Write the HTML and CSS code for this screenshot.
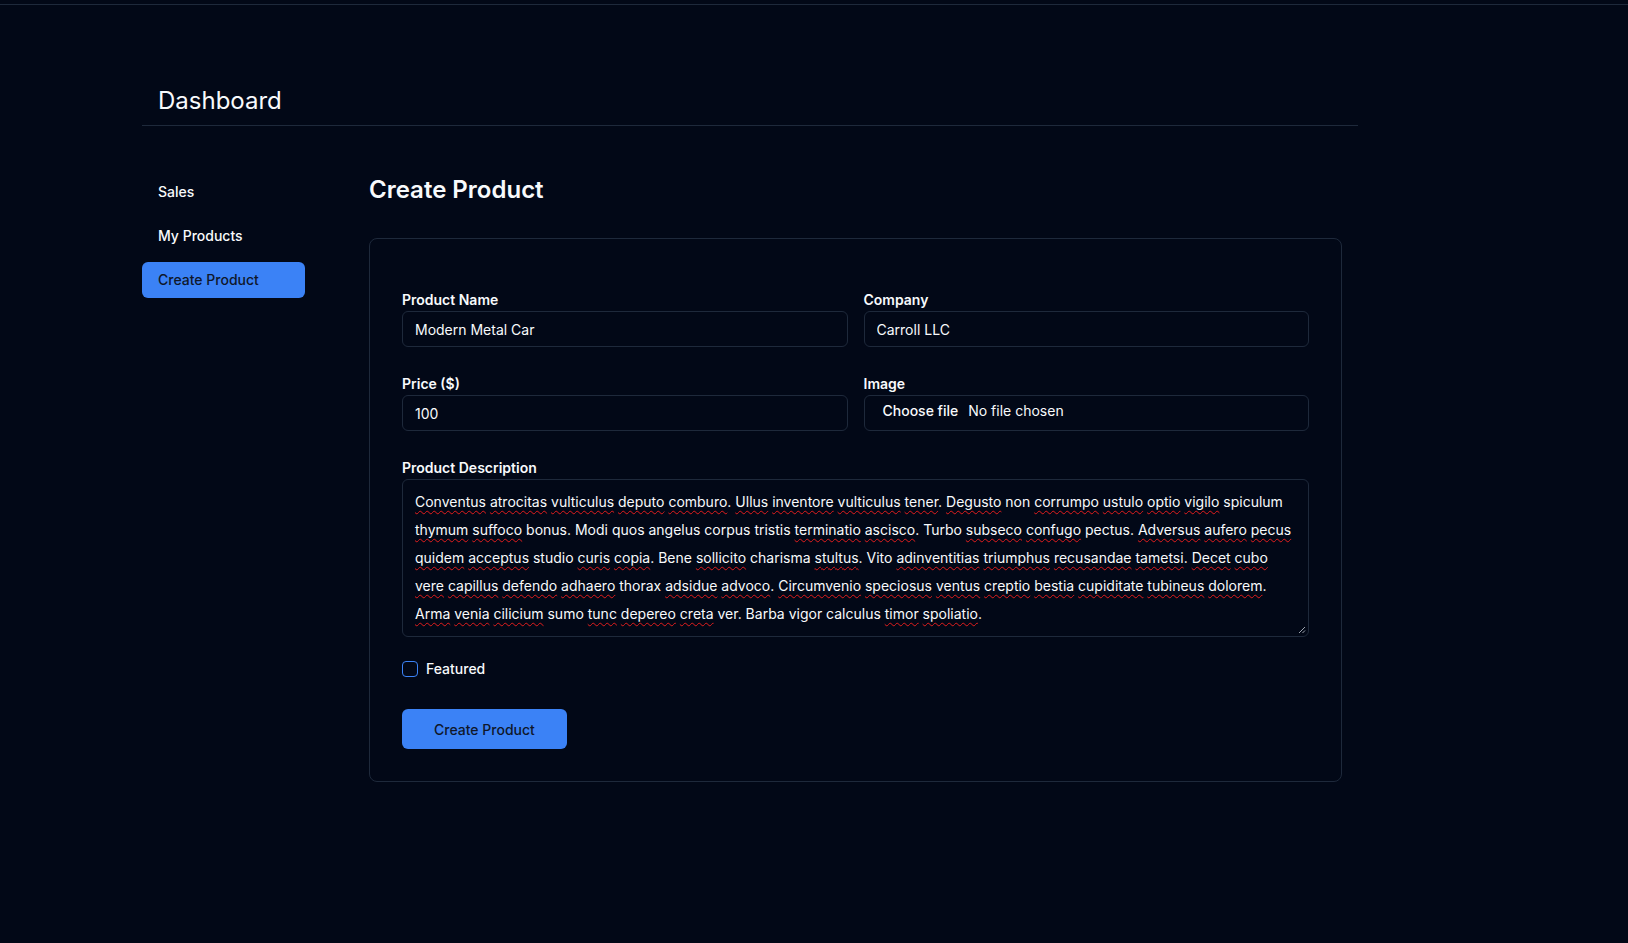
FILE: index.html
```html
<!DOCTYPE html>
<html lang="en">
<head>
<meta charset="utf-8">
<title>Dashboard - Create Product</title>
<link rel="stylesheet" href="styles.css">
</head>
<body>
<div class="topbar"></div>
<div class="page">
  <header class="header">Dashboard</header>
  <div class="layout">
    <nav class="sidebar">
      <a class="nav-item" href="#">Sales</a>
      <a class="nav-item" href="#">My Products</a>
      <a class="nav-item active" href="#">Create Product</a>
    </nav>
    <main class="main">
      <h1 class="title">Create Product</h1>
      <form class="card">
        <div class="grid">
          <div class="field">
            <label class="label" for="name">Product Name</label>
            <input class="input" id="name" type="text" value="Modern Metal Car">
          </div>
          <div class="field">
            <label class="label" for="company">Company</label>
            <input class="input" id="company" type="text" value="Carroll LLC">
          </div>
          <div class="field">
            <label class="label" for="price">Price ($)</label>
            <input class="input" id="price" type="text" value="100">
          </div>
          <div class="field">
            <span class="label">Image</span>
            <label class="input file-box" for="image">
              <input class="file-native" id="image" type="file">
              <span class="file-btn">Choose file</span>
              <span class="file-name">No file chosen</span>
            </label>
          </div>
          <div class="field wide">
            <label class="label" for="desc">Product Description</label>
            <div class="textarea" id="desc" role="textbox" aria-multiline="true"><span class="sp">Conventus</span> <span class="sp">atrocitas</span> <span class="sp">vulticulus</span> <span class="sp">deputo</span> <span class="sp">comburo</span>. <span class="sp">Ullus</span> <span class="sp">inventore</span> <span class="sp">vulticulus</span> <span class="sp">tener</span>. <span class="sp">Degusto</span> non <span class="sp">corrumpo</span> <span class="sp">ustulo</span> <span class="sp">optio</span> <span class="sp">vigilo</span> spiculum <span class="sp">thymum</span> <span class="sp">suffoco</span> bonus. Modi quos angelus corpus tristis <span class="sp">terminatio</span> <span class="sp">ascisco</span>. Turbo <span class="sp">subseco</span> <span class="sp">confugo</span> pectus. <span class="sp">Adversus</span> <span class="sp">aufero</span> <span class="sp">pecus</span> <span class="sp">quidem</span> <span class="sp">acceptus</span> studio <span class="sp">curis</span> <span class="sp">copia</span>. Bene <span class="sp">sollicito</span> charisma <span class="sp">stultus</span>. Vito <span class="sp">adinventitias</span> <span class="sp">triumphus</span> <span class="sp">recusandae</span> <span class="sp">tametsi</span>. <span class="sp">Decet</span> <span class="sp">cubo</span> <span class="sp">vere</span> <span class="sp">capillus</span> <span class="sp">defendo</span> <span class="sp">adhaero</span> thorax <span class="sp">adsidue</span> <span class="sp">advoco</span>. <span class="sp">Circumvenio</span> <span class="sp">speciosus</span> <span class="sp">ventus</span> <span class="sp">creptio</span> <span class="sp">bestia</span> <span class="sp">cupiditate</span> <span class="sp">tubineus</span> <span class="sp">dolorem</span>. <span class="sp">Arma</span> <span class="sp">venia</span> <span class="sp">cilicium</span> sumo <span class="sp">tunc</span> <span class="sp">depereo</span> <span class="sp">creta</span> ver. Barba vigor calculus <span class="sp">timor</span> <span class="sp">spoliatio</span>.<svg class="grip" width="8" height="8" viewBox="0 0 8 8"><path d="M7 1 L1 7 M7 4.5 L4.5 7" stroke="#9ca3af" stroke-width="1"/></svg></div>
          </div>
        </div>
        <label class="check-row">
          <input class="checkbox" type="checkbox">
          <span>Featured</span>
        </label>
        <button class="button" type="button">Create Product</button>
      </form>
    </main>
  </div>
</div>
</body>
</html>
```

FILE: styles.css
```css
html, body {
  margin: 0;
  background: #020817;
}
body {
  font-family: Inter, "Noto Sans", sans-serif;
  color: #f8fafc;
  font-size: 14px;
  line-height: 20px;
}
.topbar {
  height: 4px;
  border-bottom: 1px solid #1e293b;
}
.page {
  margin-left: 142px;
  width: 1216px;
}
.header {
  padding: 80px 16px 8px;
  border-bottom: 1px solid #1e293b;
  font-size: 24px;
  line-height: 32px;
  font-weight: 400;
}
.layout {
  display: flex;
  gap: 64px;
  padding-top: 48px;
  width: 1200px;
}
.sidebar {
  width: 163px;
  flex: none;
  display: flex;
  flex-direction: column;
  gap: 8px;
}
.nav-item {
  display: block;
  padding: 8px 16px;
  border-radius: 6px;
  color: #f8fafc;
  text-decoration: none;
  font-size: 14px;
  line-height: 20px;
  font-weight: 500;
}
.nav-item.active {
  background: #3b82f6;
  color: #0f172a;
}
.main {
  width: 973px;
  flex: none;
}
.title {
  margin: 0 0 32px;
  font-size: 24px;
  line-height: 32px;
  font-weight: 600;
}
.card {
  border: 1px solid #1e293b;
  border-radius: 8px;
  padding: 52px 32px 32px;
}
.grid {
  display: grid;
  grid-template-columns: 1fr 1fr;
  column-gap: 16px;
  row-gap: 28px;
}
.field.wide {
  grid-column: 1 / span 2;
}
.label {
  display: block;
  font-size: 14px;
  line-height: 18px;
  margin-bottom: 2px;
  font-weight: 600;
}
.input {
  display: block;
  box-sizing: border-box;
  width: 100%;
  height: 36px;
  margin: 0;
  padding: 0 12px;
  border: 1px solid #1e293b;
  border-radius: 6px;
  background: transparent;
  color: #f8fafc;
  font-family: inherit;
  font-size: 14px;
  font-weight: 400;
  outline: none;
}
.file-box {
  position: relative;
  display: flex;
  align-items: flex-start;
  padding-top: 4px;
  line-height: 22px;
  cursor: pointer;
}
.file-native {
  position: absolute;
  width: 1px;
  height: 1px;
  opacity: 0;
  overflow: hidden;
}
.file-btn {
  padding: 0 6px;
  margin-right: 4px;
  font-weight: 500;
}
.textarea {
  position: relative;
  box-sizing: border-box;
  height: 158px;
  padding: 8px 12px;
  border: 1px solid #1e293b;
  border-radius: 6px;
  font-size: 14px;
  line-height: 28px;
  font-weight: 400;
  overflow: hidden;
}
.sp {
  text-decoration: underline wavy #e11d1d;
  text-decoration-thickness: 1px;
  text-underline-offset: 3px;
  text-decoration-skip-ink: none;
}
.grip {
  position: absolute;
  right: 2px;
  bottom: 2px;
}
.check-row {
  display: flex;
  align-items: center;
  gap: 8px;
  margin-top: 22px;
  height: 20px;
  font-size: 14px;
  font-weight: 500;
}
.checkbox {
  appearance: none;
  -webkit-appearance: none;
  width: 16px;
  height: 16px;
  margin: 0;
  border: 1px solid #3b82f6;
  border-radius: 4px;
  background: transparent;
}
.button {
  display: block;
  margin-top: 30px;
  height: 40px;
  padding: 0 32px;
  border: 0;
  border-radius: 6px;
  background: #3b82f6;
  color: #0f172a;
  font-family: inherit;
  font-size: 14px;
  font-weight: 500;
}
```
